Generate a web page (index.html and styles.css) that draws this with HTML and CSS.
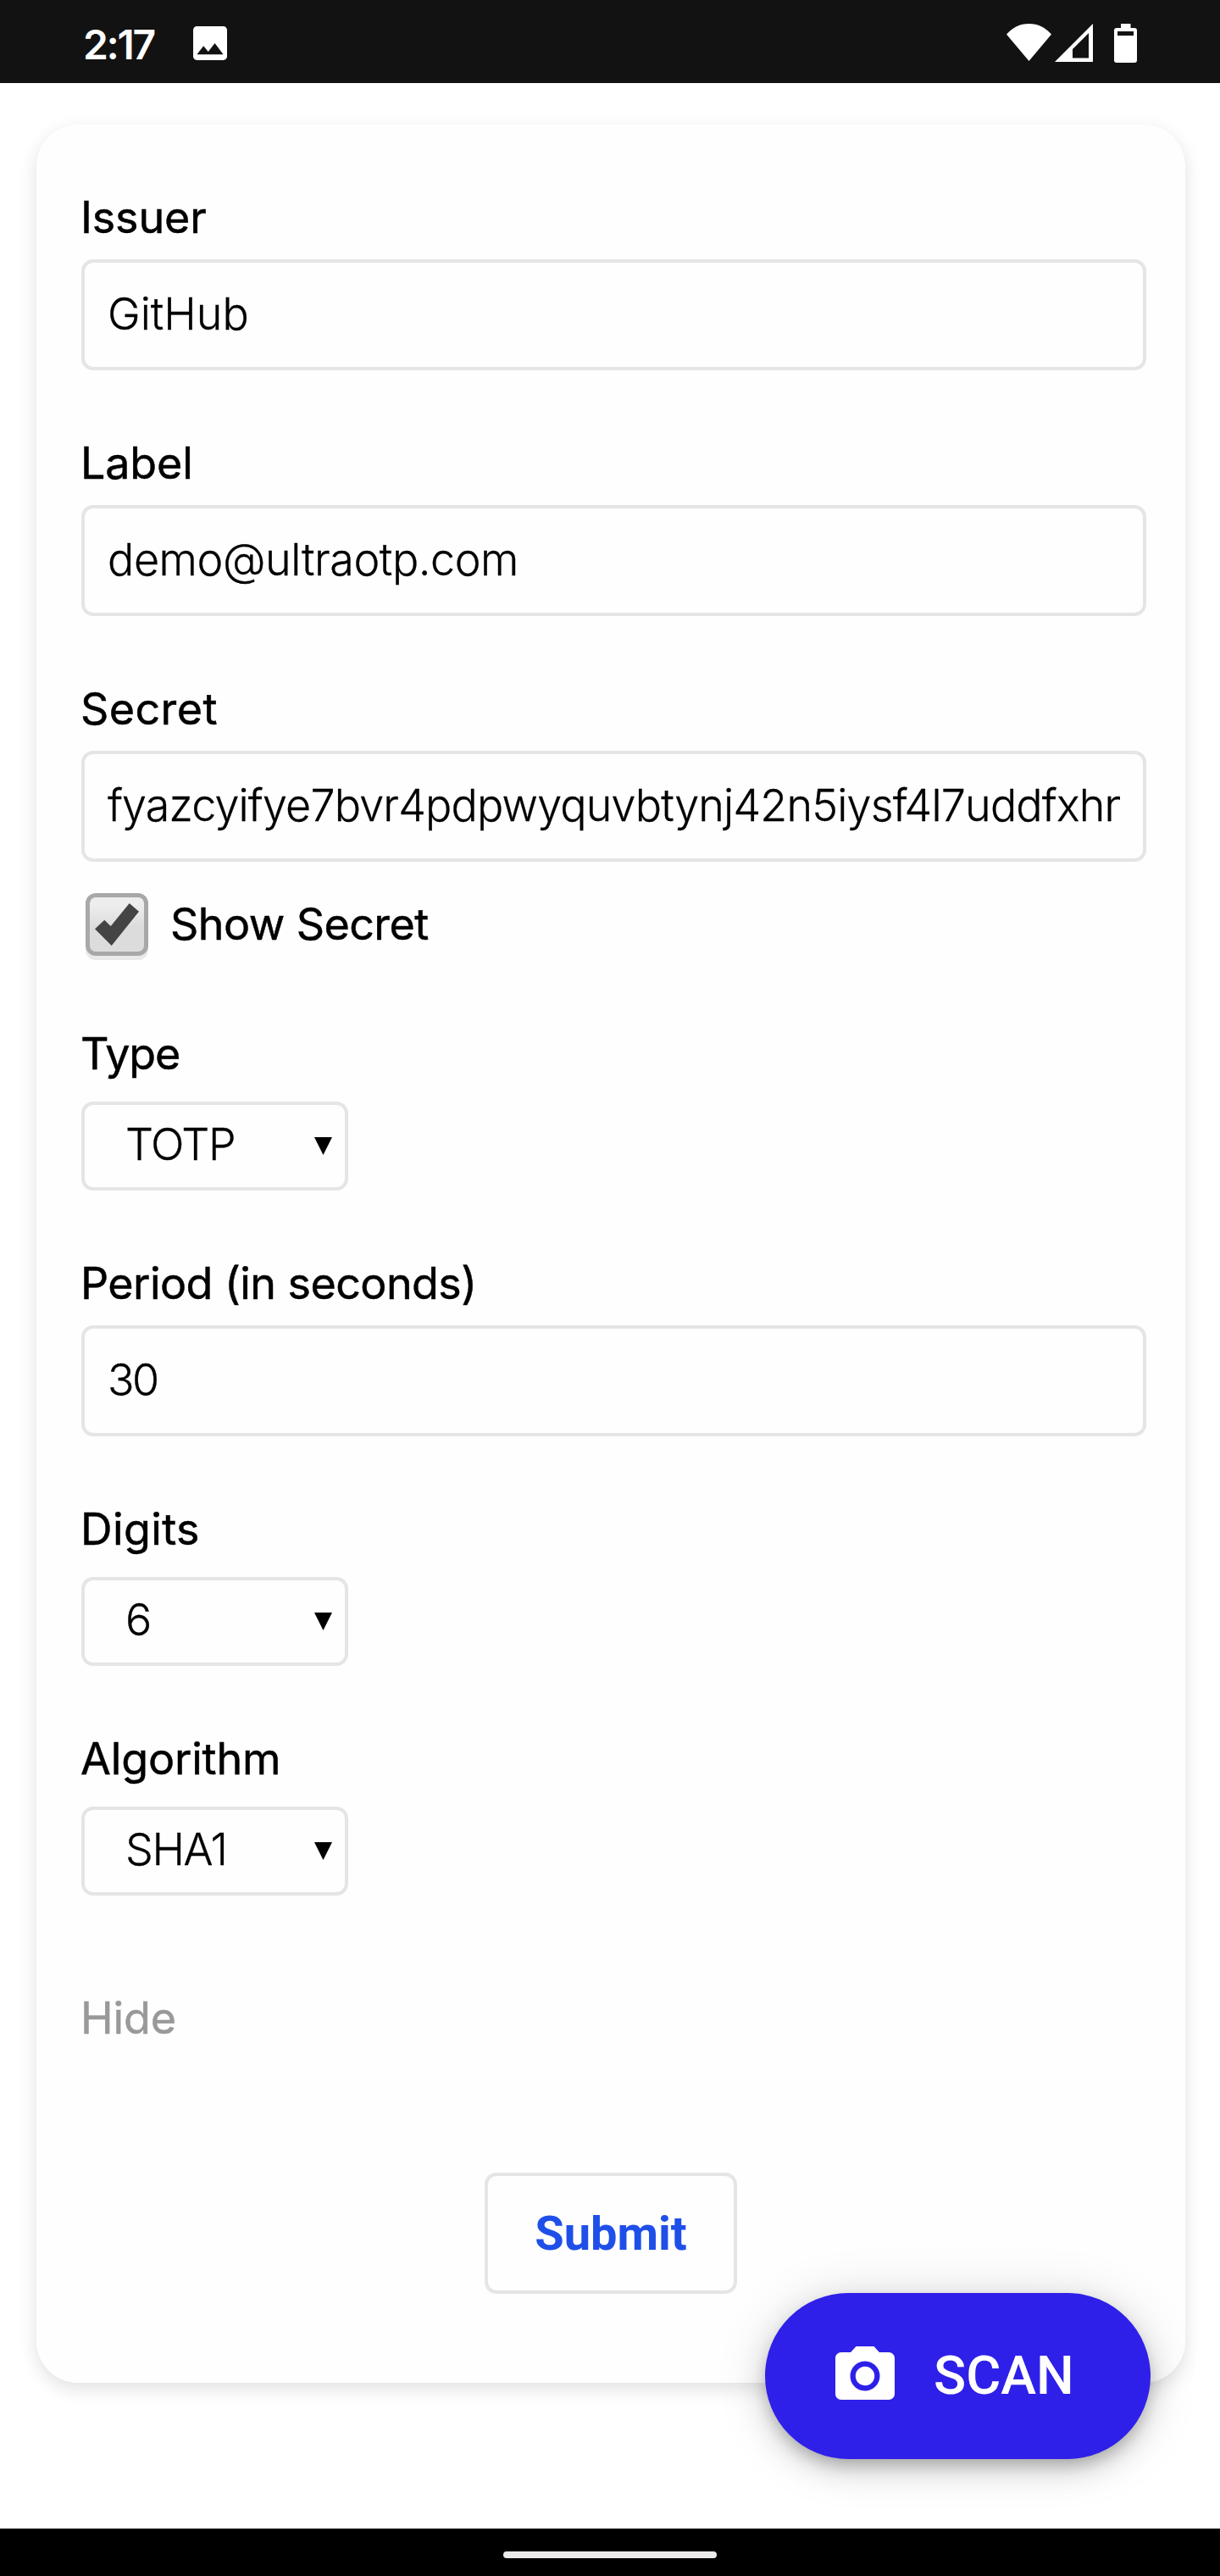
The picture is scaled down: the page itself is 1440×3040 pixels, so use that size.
FILE: index.html
```html
<!DOCTYPE html>
<html lang="en">
<head>
<meta charset="utf-8">
<title>UltraOTP</title>
<link rel="stylesheet" href="styles.css">
</head>
<body>
<header class="status-bar">
  <span class="clock">2:17</span>
  <svg class="icon-image" viewBox="3 3 18 18"><path fill="#fff" d="M21 19V5c0-1.1-.9-2-2-2H5c-1.100 0-2 .9-2 2v14c0 1.100.9 2 2 2h14c1.100 0 2-.9 2-2zM8.500 13.500l2.500 3.010L14.500 12l4.500 6H5l3.500-4.500z"/></svg>
  <div class="status-icons">
    <svg class="icon-wifi" viewBox="0 0 53 44"><path fill="#fff" d="M0 12.500C7 4.500 16 0 26.500 0S46 4.500 53 12.500L26.500 44z"/></svg>
    <svg class="icon-signal" viewBox="0 0 45 45"><path fill="#fff" fill-rule="evenodd" d="M45 0v45H0zM40 11L21 30v10.500h19z"/></svg>
    <svg class="icon-battery" viewBox="0 0 27 46"><path fill="#fff" fill-rule="evenodd" d="M8 0h11.500v5H24q3 0 3 3v35q0 3-3 3H3q-3 0-3-3V8q0-3 3-3h5zM4 9v5h19V9z"/></svg>
  </div>
</header>
<main class="page">
  <form class="card">
    <div class="field"><label class="label">Issuer</label><div class="input"><span class="value">GitHub</span></div></div>
    <div class="field"><label class="label">Label</label><div class="input"><span class="value value-email">demo@ultraotp.com</span></div></div>
    <div class="field"><label class="label label-wide">Secret</label><div class="input"><span class="value value-secret">fyazcyifye7bvr4pdpwyquvbtynj42n5iysf4l7uddfxhn</span></div></div>
    <div class="check-row">
      <span class="checkbox"><svg class="tick" viewBox="0 0 52 50"><path fill="#444" d="M0 30.300L11.300 19.700l7.400 7.300L40.700 0l11.300 9.700L19.700 50z"/></svg></span>
      <span class="label label-tight">Show Secret</span>
    </div>
    <div class="field"><label class="label label-type">Type</label><div class="select"><span class="value value-caps">TOTP</span><i class="arrow"></i></div></div>
    <div class="field"><label class="label label-tight">Period (in seconds)</label><div class="input"><span class="value value-number">30</span></div></div>
    <div class="field"><label class="label label-wide">Digits</label><div class="select"><span class="value">6</span><i class="arrow"></i></div></div>
    <div class="field"><label class="label">Algorithm</label><div class="select"><span class="value value-caps">SHA1</span><i class="arrow"></i></div></div>
    <a class="label hide-link">Hide</a>
    <button class="submit" type="button">Submit</button>
  </form>
  <button class="scan" type="button">
    <svg class="icon-camera" viewBox="2 2 20 18"><path fill="#fff" d="M9 2L7.170 4H4c-1.100 0-2 .9-2 2v12c0 1.100.9 2 2 2h16c1.100 0 2-.9 2-2V6c0-1.100-.9-2-2-2h-3.170L15 2H9zm3 15c-2.760 0-5-2.240-5-5s2.240-5 5-5 5 2.240 5 5-2.240 5-5 5z"/><circle cx="12" cy="12" r="3.200" fill="#fff"/></svg>
    <span class="scan-text">SCAN</span>
  </button>
</main>
<footer class="nav-bar"><span class="nav-pill"></span></footer>
</body>
</html>
```
FILE: styles.css
```css
* { box-sizing: border-box; }

body {
  margin: 0;
  width: 1440px;
  height: 3040px;
  display: flex;
  flex-direction: column;
  overflow: hidden;
  background: #fff;
  color: #000;
  font-family: Inter, "Liberation Sans", sans-serif;
}

svg { display: block; flex: none; }

.status-bar {
  flex: none;
  height: 98px;
  display: flex;
  align-items: flex-start;
  padding: 28px 98px 0 98px;
  background: #121212;
  color: #fff;
}
.clock { width: 130px; font: 600 48px/50px Inter, sans-serif; letter-spacing: -2.3px; }
.icon-image { width: 40px; height: 40px; margin-top: 3px; }
.status-icons { display: flex; margin-left: auto; }
.icon-wifi { width: 53px; height: 44px; }
.icon-signal { width: 45px; height: 45px; margin-left: 4px; }
.icon-battery { width: 27px; height: 46px; margin-left: 25px; }

.page {
  position: relative;
  flex: 1;
  padding: 49px 41px 0 43px;
}

.card {
  height: 2665px;
  display: flex;
  flex-direction: column;
  align-items: flex-start;
  padding: 77px 46px 0 53px;
  border-radius: 49px;
  background: #fefefe;
  box-shadow: 0 7px 21px rgba(0, 0, 0, 0.12);
}

.field {
  width: 100%;
  display: flex;
  flex-direction: column;
  margin-bottom: 77px;
}
.label {
  font-size: 52px;
  line-height: 66px;
  font-weight: 400;
  -webkit-text-stroke: 0.5px currentColor;
  letter-spacing: -0.15px;
  text-indent: -1px;
  white-space: nowrap;
}
.label-wide { letter-spacing: 0.4px; }
.label-tight { letter-spacing: -0.57px; }
.label-type { letter-spacing: -1.1px; }

.value {
  display: block;
  font-size: 52px;
  line-height: 64px;
  font-weight: 300;
  -webkit-text-stroke: 0.3px currentColor;
  white-space: nowrap;
}
.value-email { letter-spacing: -0.42px; }
.value-secret { letter-spacing: -0.81px; }
.value-caps { letter-spacing: -1.4px; }
.value-number { letter-spacing: -2.5px; }

.input,
.select {
  border: 4px solid #e5e5e5;
  border-radius: 14px;
}
.input {
  height: 131px;
  margin-top: 16px;
  padding: 29px 27px 0 26px;
}
.input .value { overflow: hidden; padding-left: 1px; }
.select {
  width: 315px;
  height: 105px;
  margin-top: 23px;
  display: flex;
  justify-content: space-between;
  padding: 15px 15px 0 48px;
}
.arrow {
  width: 21px;
  height: 21px;
  margin-top: 23px;
  background: #000;
  clip-path: polygon(0 0, 100% 0, 50% 100%);
}

.check-row {
  display: flex;
  align-items: center;
  height: 74px;
  margin: -40px 0 83px 5px;
}
.checkbox {
  width: 74px;
  height: 74px;
  margin-right: 27px;
  padding: 7px 0 0 6px;
  border: 5px solid #a8a8a8;
  border-radius: 12px;
  background: linear-gradient(#ededed 15%, #dcdcdc 55%);
  box-shadow: 0 5px 0 #e9e9e9;
}
.tick { width: 52px; height: 50px; }

.hide-link { margin-top: 35px; color: #999; }

.submit {
  align-self: center;
  width: 298px;
  height: 143px;
  margin-top: 149px;
  margin-right: 7px;
  padding: 0;
  border: 4px solid #e5e5e5;
  border-radius: 14px;
  background: #fefefe;
  color: #1f4fe9;
  font: 700 56px/64px Roboto, sans-serif;
}

.scan {
  position: absolute;
  right: 82px;
  bottom: 82px;
  width: 455px;
  height: 196px;
  display: flex;
  align-items: center;
  padding: 0 0 0 83px;
  border: 0;
  border-radius: 98px;
  background: #2e20e8;
  color: #fff;
  box-shadow: 0 10px 17px -3px rgba(0, 0, 0, 0.2), 0 12px 35px rgba(0, 0, 0, 0.14), 0 4px 63px rgba(0, 0, 0, 0.12);
}
.icon-camera { width: 70px; height: 63px; margin-top: -8px; }
.scan-text { margin-left: 46px; font: 500 63px/72px Roboto, sans-serif; }

.nav-bar {
  flex: none;
  height: 56px;
  display: flex;
  justify-content: center;
  padding-top: 27px;
  background: #000;
}
.nav-pill { width: 252px; height: 8px; border-radius: 4px; background: #ebe9ea; }
```
